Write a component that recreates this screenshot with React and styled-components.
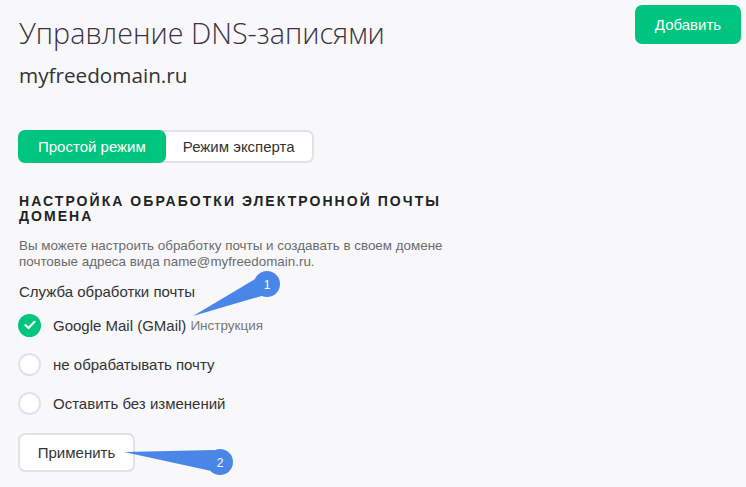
import React, { useState } from 'react';
import styled, { createGlobalStyle } from 'styled-components';

const GlobalStyle = createGlobalStyle`
    * { box-sizing: border-box; }
    body {
        margin: 0;
        background: #f8f8fb;
        font-family: 'Liberation Sans', Arial, sans-serif;
        color: #333;
    }
`;

const options = [
    { id: 'gmail', label: 'Google Mail (GMail)', hint: 'Инструкция' },
    { id: 'none', label: 'не обрабатывать почту' },
    { id: 'keep', label: 'Оставить без изменений' },
];

function App() {
    const [mode, setMode] = useState('simple');
    const [selected, setSelected] = useState('gmail');

    return (
        <>
            <GlobalStyle />
            <Page>
                <Header>
                    <div>
                        <Title>Управление DNS-записями</Title>
                        <Domain>myfreedomain.ru</Domain>
                    </div>
                    <AddButton>Добавить</AddButton>
                </Header>

                <Tabs>
                    <Tab active={mode === 'simple'} onClick={() => setMode('simple')}>
                        Простой режим
                    </Tab>
                    <Tab active={mode === 'expert'} onClick={() => setMode('expert')}>
                        Режим эксперта
                    </Tab>
                </Tabs>

                <Section>
                    <SectionTitle>Настройка обработки электронной почты домена</SectionTitle>
                    <Description>
                        Вы можете настроить обработку почты и создавать в своем домене почтовые адреса вида
                        name@myfreedomain.ru.
                    </Description>
                    <FieldLabel>Служба обработки почты</FieldLabel>
                    <RadioList>
                        {options.map((opt) => (
                            <RadioRow key={opt.id} onClick={() => setSelected(opt.id)}>
                                <RadioCircle checked={selected === opt.id}>
                                    {selected === opt.id && (
                                        <svg width="12" height="10" viewBox="0 0 12 10">
                                            <path
                                                d="M1.5 5.2 L4.6 8 L10.5 1.8"
                                                fill="none"
                                                stroke="#fff"
                                                strokeWidth="2.2"
                                                strokeLinecap="round"
                                                strokeLinejoin="round"
                                            />
                                        </svg>
                                    )}
                                </RadioCircle>
                                <RadioLabel>{opt.label}</RadioLabel>
                                {opt.hint && <Hint>{opt.hint}</Hint>}
                            </RadioRow>
                        ))}
                    </RadioList>
                    <ApplyButton>Применить</ApplyButton>
                </Section>

                {/* выноски-подсказки поверх страницы */}
                <Callout viewBox="0 0 746 487" width="746" height="487">
                    <path d="M193 316 L262 275 L275 292 Z" fill="#4a86e8" />
                    <circle cx="267" cy="284" r="13" fill="#4a86e8" />
                    <text x="267" y="289" fill="#fff" fontSize="12" textAnchor="middle" fontFamily="Liberation Sans, Arial, sans-serif">
                        1
                    </text>
                    <path d="M124 452 L214 450 L216 472 Z" fill="#4a86e8" />
                    <circle cx="220" cy="462" r="13" fill="#4a86e8" />
                    <text x="220" y="467" fill="#fff" fontSize="12" textAnchor="middle" fontFamily="Liberation Sans, Arial, sans-serif">
                        2
                    </text>
                </Callout>
            </Page>
        </>
    );
}

const Page = styled.div`
    position: relative;
    width: 746px;
    height: 487px;
    padding: 5px 5px 0 18px;
    overflow: hidden;
`;

const Header = styled.div`
    display: flex;
    justify-content: space-between;
    align-items: flex-start;
`;

const Title = styled.h1`
    margin: 8px 0 0 1px;
    font-family: 'Open Sans', sans-serif;
    font-weight: 300;
    font-size: 28.7px;
    line-height: 40px;
    color: #3a3340;
`;

const Domain = styled.div`
    margin: 9px 0 0 1px;
    font-family: 'Open Sans', sans-serif;
    font-size: 20.7px;
    line-height: 26px;
    color: #333;
`;

const AddButton = styled.button`
    width: 106px;
    height: 39px;
    border: none;
    border-radius: 7px;
    background: #00c57e;
    color: #fff;
    font-family: 'Liberation Sans', Arial, sans-serif;
    font-size: 15px;
    cursor: pointer;
`;

const Tabs = styled.div`
    display: inline-flex;
    margin-top: 42px;
    border: 2px solid #e2e2e6;
    border-radius: 7px;
    background: #fff;
`;

const Tab = styled.button`
    padding: 0 ${(p) => (p.active ? '20px' : '17px')};
    margin: ${(p) => (p.active ? '-2px 0 -2px -2px' : '0')};
    height: ${(p) => (p.active ? '33px' : '29px')};
    border: none;
    border-radius: 7px;
    background: ${(p) => (p.active ? '#00c57e' : 'transparent')};
    color: ${(p) => (p.active ? '#fff' : '#333')};
    font-family: 'Liberation Sans', Arial, sans-serif;
    font-size: 15px;
    cursor: pointer;
`;

const Section = styled.div`
    margin-top: 31px;
    width: 460px;
`;

const SectionTitle = styled.h2`
    margin: 0 0 0 1px;
    font-size: 14px;
    line-height: 15px;
    font-weight: 700;
    letter-spacing: 2.05px;
    text-transform: uppercase;
    color: #222;
`;

const Description = styled.p`
    margin: 14px 0 0 1px;
    font-size: 13.4px;
    line-height: 16px;
    color: #6b6b6b;
`;

const FieldLabel = styled.div`
    margin: 13px 0 0 1px;
    font-size: 15px;
    line-height: 18px;
    color: #333;
`;

const RadioList = styled.div`
    display: flex;
    flex-direction: column;
    gap: 17px;
    margin-top: 13px;
`;

const RadioRow = styled.label`
    display: flex;
    align-items: center;
    height: 22px;
    cursor: pointer;
`;

const RadioCircle = styled.span`
    display: flex;
    align-items: center;
    justify-content: center;
    width: 23px;
    height: 23px;
    border-radius: 50%;
    border: ${(p) => (p.checked ? 'none' : '2px solid #e2e2e6')};
    background: ${(p) => (p.checked ? '#00c57e' : '#fff')};
`;

const RadioLabel = styled.span`
    margin-left: 12px;
    font-size: 15px;
    color: #333;
`;

const Hint = styled.span`
    margin-left: 4px;
    font-size: 13.5px;
    color: #777;
`;

const ApplyButton = styled.button`
    margin-top: 19px;
    width: 117px;
    height: 39px;
    border: 2px solid #e2e2e6;
    border-radius: 7px;
    background: #fff;
    color: #333;
    font-family: 'Liberation Sans', Arial, sans-serif;
    font-size: 15px;
    cursor: pointer;
`;

const Callout = styled.svg`
    position: absolute;
    top: 0;
    left: 0;
    pointer-events: none;
`;

export default App;
